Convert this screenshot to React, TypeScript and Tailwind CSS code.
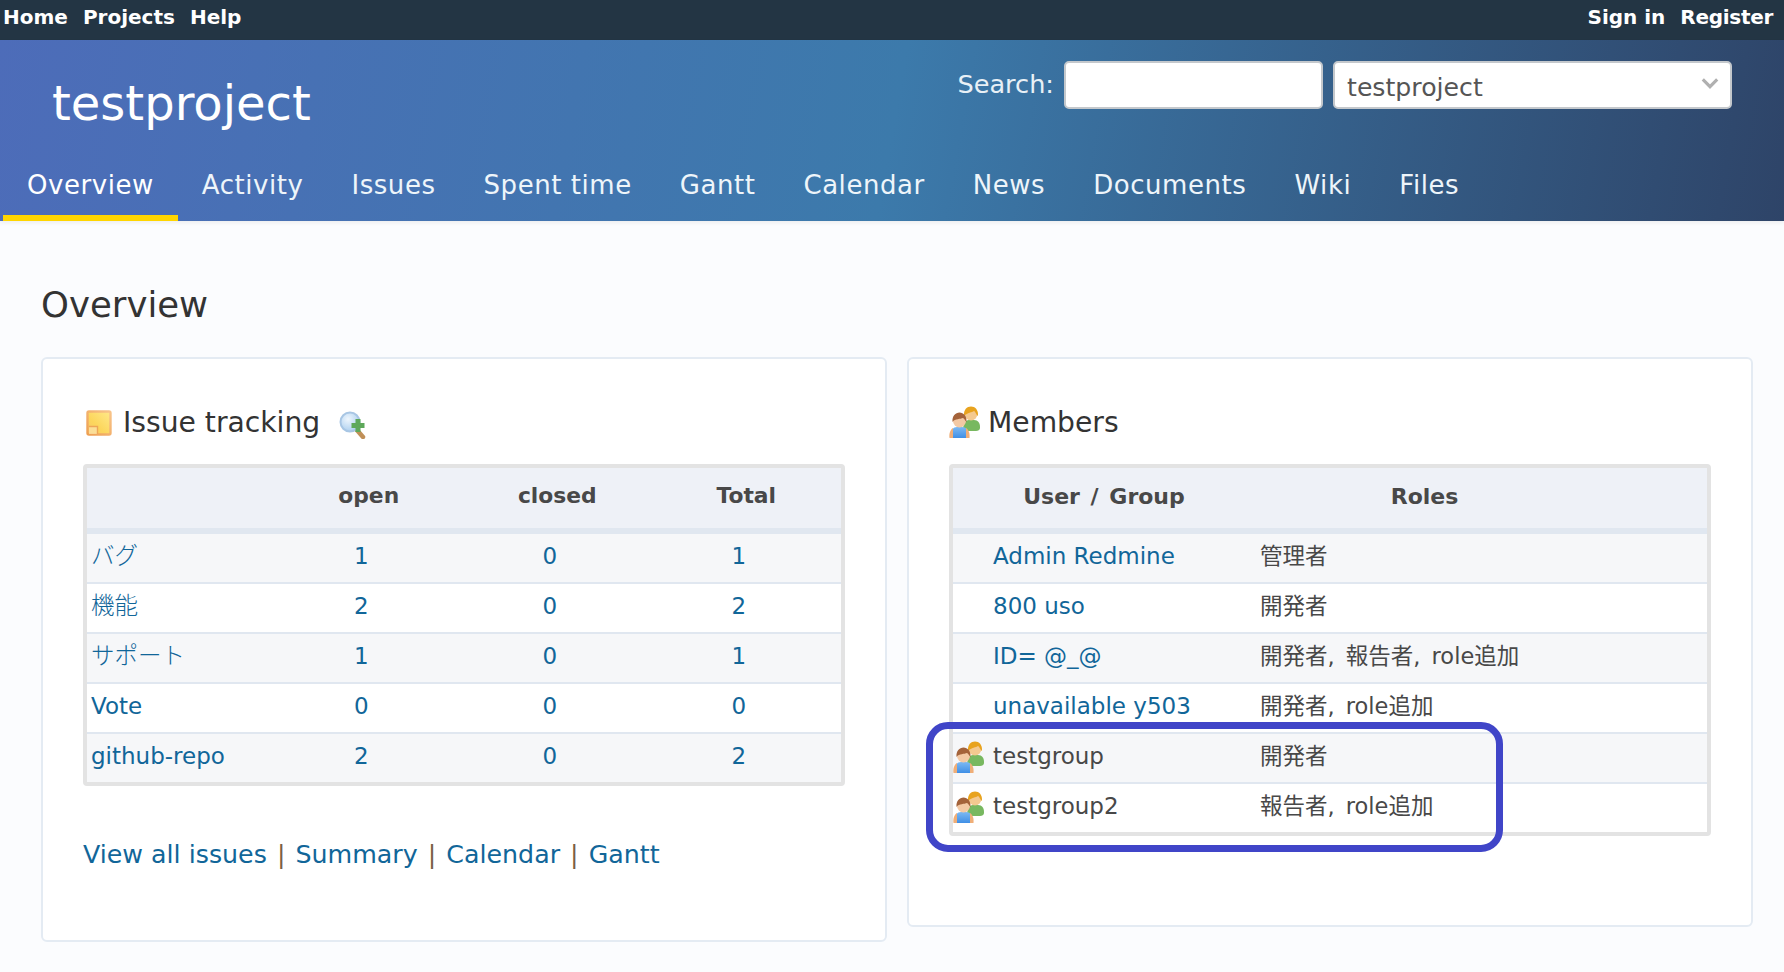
import React from "react";

function TicketIcon() {
  return (
    <svg viewBox="0 0 26 26" className="w-[26px] h-[26px] shrink-0">
      <defs>
        <linearGradient id="tk" x1="1" y1="0" x2="0" y2="1">
          <stop offset="0" stopColor="#ffe98a" />
          <stop offset="0.6" stopColor="#fcd65c" />
          <stop offset="1" stopColor="#f8c86a" />
        </linearGradient>
        <linearGradient id="tb" x1="1" y1="0" x2="0" y2="1">
          <stop offset="0" stopColor="#f8c48a" />
          <stop offset="1" stopColor="#ee9f52" />
        </linearGradient>
      </defs>
      <rect x="1.5" y="1.5" width="23" height="23" rx="1.5" fill="url(#tk)" stroke="url(#tb)" strokeWidth="2.4" />
      <path d="M3 16h9v8H3z" fill="#fbe3a8" opacity="0.75" />
      <path d="M3 16.5h8.5V24" fill="none" stroke="#eda657" strokeWidth="1.4" />
    </svg>
  );
}

function AddFilterIcon() {
  return (
    <svg viewBox="0 0 28 28" className="w-[28px] h-[28px] shrink-0">
      <defs>
        <radialGradient id="mg" cx="0.4" cy="0.35" r="0.7">
          <stop offset="0" stopColor="#eef6fd" />
          <stop offset="1" stopColor="#a9cdee" />
        </radialGradient>
      </defs>
      <path d="M17 18l7 8" stroke="#c09058" strokeWidth="4.5" strokeLinecap="round" />
      <circle cx="11" cy="11" r="9.5" fill="url(#mg)" stroke="#a8c6e4" strokeWidth="2" />
      <path d="M19 8v13M12.5 14.5h13" stroke="#5da85a" strokeWidth="5" />
    </svg>
  );
}

function GroupIcon({ id }: { id: string }) {
  return (
    <svg viewBox="0 0 32 32" className="w-[32px] h-[32px] shrink-0">
      <defs>
        <linearGradient id={`b${id}`} x1="0" y1="0" x2="0" y2="1">
          <stop offset="0" stopColor="#7db9f2" />
          <stop offset="1" stopColor="#3f8fe6" />
        </linearGradient>
      </defs>
      <path d="M14 24c0-5 2-10 6-10h5c4 0 6 3 6 7v1c0 2-2 3-4 3H16z" fill="#78b860" />
      <circle cx="22" cy="8" r="6.5" fill="#f4c990" />
      <path d="M15 10c-.5-6.500 3-9.500 7-9.500s7.500 3 7 9.500c-2-1.500-2.500-4.500-4-5-2 1.500-6.500 1.500-10 5z" fill="#e8a31e" />
      <path d="M2 28c0-4 2-7 6-7h5c4 0 6 3 6 6v5H2z" fill={`url(#b${id})`} />
      <path d="M0.5 32c-.5-4 .5-8 3.500-10v10zM20.5 32c.5-4-.5-8-3.500-10v10z" fill="#efae78" />
      <circle cx="10.5" cy="15" r="6.5" fill="#f3c9a4" />
      <path d="M3.500 16c-.5-6 3-9.500 7-9.500s7.500 3.500 7 9.500c-1.500-1-2-3.500-3.500-4-2.500 1.200-8 .5-10.500 4z" fill="#a4633a" />
    </svg>
  );
}

const Link = ({ children, className = "" }: { children: React.ReactNode; className?: string }) => (
  <a className={`text-[#116699] ${className}`}>{children}</a>
);

const Sep = () => <span className="mx-[2px]"> | </span>;

const tabs = ["Overview", "Activity", "Issues", "Spent time", "Gantt", "Calendar", "News", "Documents", "Wiki", "Files"];

const issueRows = [
  ["バグ", "1", "0", "1"],
  ["機能", "2", "0", "2"],
  ["サポート", "1", "0", "1"],
  ["Vote", "0", "0", "0"],
  ["github-repo", "2", "0", "2"],
];

const memberRows: [string, string, boolean][] = [
  ["Admin Redmine", "管理者", false],
  ["800 uso", "開発者", false],
  ["ID= @_@", "開発者, 報告者, role追加", false],
  ["unavailable y503", "開発者, role追加", false],
  ["testgroup", "開発者", true],
  ["testgroup2", "報告者, role追加", true],
];

export default function App() {
  return (
    <div className="min-h-screen bg-[#fbfcfe] text-[23px] text-[#484848] [font-family:DejaVu_Sans,Noto_Sans_CJK_JP,sans-serif]">
      <div className="h-10 bg-[#233544] flex justify-between pl-[3px] pr-[11px] pt-[3px] text-[20px] leading-[28px] font-bold text-white">
        <div className="flex gap-[15px]">
          <a>Home</a>
          <a>Projects</a>
          <a>Help</a>
        </div>
        <div className="flex gap-[15px]">
          <a>Sign in</a>
          <a className="tracking-[-0.3px]">Register</a>
        </div>
      </div>

      <header className="h-[181px] flex flex-col bg-[linear-gradient(100deg,#4d6cb9_0%,#3c7aab_50%,#2e4468_100%)] shadow-[0_2px_4px_rgba(0,0,0,0.06)]">
        <div className="flex justify-between pl-[52px] pr-[52px]">
          <h1 className="mt-[28px] text-[48px] leading-[70px] font-normal text-white">testproject</h1>
          <div className="flex items-start mt-[21px]">
            <label className="mt-[8px] mr-[10px] text-[25.6px] leading-[30px] text-[#e8f0f6]">Search:</label>
            <input className="w-[259px] h-[48px] bg-white border-2 border-[#c4c8cc] rounded-[5px] mr-[10px]" />
            <div className="relative w-[399px] h-[48px] bg-white border-2 border-[#c4c8cc] rounded-[5px] pl-[12px] pt-[7px] text-[25.2px] leading-[36px] text-[#555]">
              testproject
              <svg viewBox="0 0 20 14" className="absolute right-[11px] top-[14px] w-[18px] h-[13px]">
                <path d="M2 2.5l8 8 8-8" fill="none" stroke="#b0b0b0" strokeWidth="3.5" />
              </svg>
            </div>
          </div>
        </div>
        <nav className="mt-auto flex pl-[3px] text-[26px] tracking-[0.55px]">
          {tabs.map((t, i) => (
            <a
              key={t}
              className={`h-[61px] pt-[10px] px-[24px] leading-[30px] text-[#eef5fa] border-b-[6px] ${
                i === 0 ? "border-[#ffd500] text-white" : "border-transparent"
              }`}
            >
              {t}
            </a>
          ))}
        </nav>
      </header>

      <main className="pl-[41px] pr-[32px]">
        <h2 className="pt-[63px] pb-[31px] text-[35.5px] leading-[42px] font-normal text-[#333]">Overview</h2>
        <div className="grid grid-cols-[846px_846px] gap-[20px] items-start">
          <section className="h-[585px] bg-white border-2 border-[#e4ebf3] rounded-[6px] pt-[48px] px-[40px]">
            <div className="flex items-center h-[32px]">
              <span className="ml-[3px] mr-[11px]">
                <TicketIcon />
              </span>
              <h3 className="text-[28.2px] leading-[32px] font-normal text-[#333]">Issue tracking</h3>
              <span className="ml-[19px] mt-[3px]">
                <AddFilterIcon />
              </span>
            </div>
            <table className="mt-[25px] w-[762px] table-fixed border-separate border-spacing-0 border-4 border-[#e3e3e3] rounded-[4px]">
              <thead>
                <tr className="h-[66px] bg-[#eef1f7] text-[21.8px] font-bold">
                  <th className="w-[187.5px] border-b-[6px] border-[#e0e7f0]" />
                  <th className="w-[188.5px] border-b-[6px] border-[#e0e7f0] pb-[3px]">open</th>
                  <th className="w-[188.5px] border-b-[6px] border-[#e0e7f0] pb-[3px]">closed</th>
                  <th className="w-[189.5px] border-b-[6px] border-[#e0e7f0] pb-[3px]">Total</th>
                </tr>
              </thead>
              <tbody>
                {issueRows.map((r, i) => (
                  <tr key={r[0]} className={`${i < 4 ? "h-[50px]" : "h-[48px]"} ${i % 2 === 0 ? "bg-[#f6f7f9]" : "bg-white"}`}>
                    <td className={`pl-[4px] pb-[3px] ${i < 4 ? "border-b-2 border-[#e0e7f0]" : ""}`}>
                      <Link className={i < 3 ? "font-light text-[23.5px]" : ""}>{r[0]}</Link>
                    </td>
                    {r.slice(1).map((n, j) => (
                      <td key={j} className={`text-center pr-[15px] pb-[3px] ${i < 4 ? "border-b-2 border-[#e0e7f0]" : ""}`}>
                        <Link>{n}</Link>
                      </td>
                    ))}
                  </tr>
                ))}
              </tbody>
            </table>
            <p className="mt-[50px] text-[25.3px] leading-[38px] text-[#7a5f45]">
              <Link>View all issues</Link>
              <Sep />
              <Link>Summary</Link>
              <Sep />
              <Link>Calendar</Link>
              <Sep />
              <Link>Gantt</Link>
            </p>
          </section>

          <section className="relative h-[570px] bg-white border-2 border-[#e4ebf3] rounded-[6px] pt-[48px] px-[40px]">
            <div className="flex items-center h-[32px]">
              <span className="-mt-[2px]">
                <GroupIcon id="h" />
              </span>
              <h3 className="ml-[7px] text-[28.2px] leading-[32px] font-normal text-[#333]">Members</h3>
            </div>
            <table className="mt-[25px] w-[762px] table-fixed border-separate border-spacing-0 border-4 border-[#e3e3e3] rounded-[4px]">
              <thead>
                <tr className="h-[66px] bg-[#eef1f7] text-[22px] font-bold">
                  <th className="w-[302px] border-b-[6px] border-[#e0e7f0] pb-[3px] [word-spacing:3px]">User / Group</th>
                  <th className="border-b-[6px] border-[#e0e7f0] pb-[3px] pr-[113px]">Roles</th>
                </tr>
              </thead>
              <tbody>
                {memberRows.map(([name, role, group], i) => (
                  <tr key={name} className={`${i < 5 ? "h-[50px]" : "h-[48px]"} ${i % 2 === 0 ? "bg-[#f6f7f9]" : "bg-white"}`}>
                    <td className={`pb-[3px] ${i < 5 ? "border-b-2 border-[#e0e7f0]" : ""}`}>
                      <div className="flex items-center">
                        {group ? (
                          <>
                            <GroupIcon id={`r${i}`} />
                            <span className="ml-[8px]">{name}</span>
                          </>
                        ) : (
                          <Link className="ml-[40px]">{name}</Link>
                        )}
                      </div>
                    </td>
                    <td className={`pl-[5px] pb-[3px] text-[22.5px] [word-spacing:4px] ${i < 5 ? "border-b-2 border-[#e0e7f0]" : ""}`}>{role}</td>
                  </tr>
                ))}
              </tbody>
            </table>
            <div className="absolute left-[17px] top-[363px] w-[577px] h-[130px] border-[7px] border-[#4045c8] rounded-[22px]" />
          </section>
        </div>
      </main>
    </div>
  );
}
